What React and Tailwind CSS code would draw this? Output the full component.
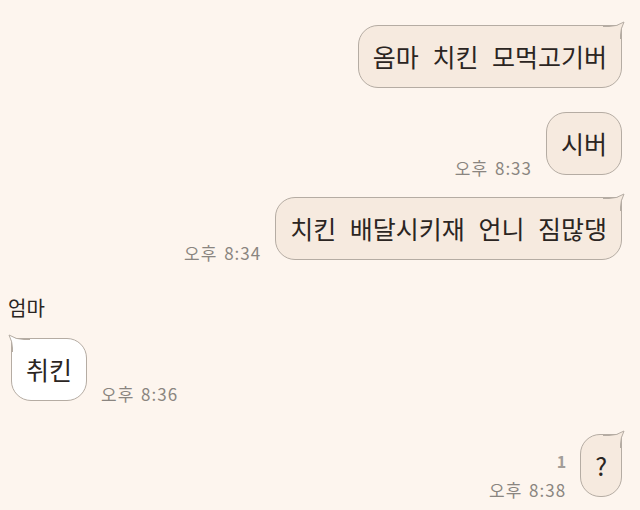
import React from 'react';

const FONT = { fontFamily: '"Noto Sans CJK KR", "Noto Sans", sans-serif' };

function Ear({ side, fill }) {
  // little pointed corner of the speech bubble
  const right = side === 'right';
  return (
    <svg
      width="22"
      height="18"
      viewBox="0 0 22 18"
      className={`absolute top-[-5px] ${right ? 'right-[-4px]' : 'left-[-4px] -scale-x-100'}`}
    >
      <path d="M0 5.5 L6 5.5 Q14 5.5 21 1 Q17.5 8 17.5 14 L17.5 18 L0 18 Z" fill={fill} />
      <path d="M0 5.5 L6 5.5 Q14 5.5 21 1 Q17.5 8 17.5 14 L17.5 18" fill="none" stroke="#b5aca3" strokeWidth="1" />
    </svg>
  );
}

function Bubble({ text, mine = true, tail = false }) {
  const fill = mine ? '#f6eadf' : '#ffffff';
  return (
    <div
      className={`relative rounded-[20px] border border-[#b5aca3] px-[14px] py-[15px] text-[25px] leading-[31px] text-[#2b2522] [word-spacing:8px] ${mine ? 'bg-[#f6eadf]' : 'bg-white'} ${tail ? (mine ? 'rounded-tr-none' : 'rounded-tl-none') : ''}`}
    >
      {tail && <Ear side={mine ? 'right' : 'left'} fill={fill} />}
      <span className="relative">{text}</span>
    </div>
  );
}

function Time({ t }) {
  return (
    <span className="mb-[-4px] text-[17px] leading-[22px] tracking-[1px] text-[#8a8580] [word-spacing:2px]">{t}</span>
  );
}

export default function App() {
  return (
    <div className="h-[510px] w-[640px] overflow-hidden bg-[#fdf5ee] pt-[25px]" style={FONT}>
      <div className="flex justify-end pr-[18px]">
        <Bubble text="옴마 치킨 모먹고기버" tail />
      </div>
      <div className="mt-[24px] flex items-end justify-end gap-[14px] pr-[18px]">
        <Time t="오후 8:33" />
        <Bubble text="시버" />
      </div>
      <div className="mt-[22px] flex items-end justify-end gap-[14px] pr-[18px]">
        <Time t="오후 8:34" />
        <Bubble text="치킨 배달시키재 언니 짐많댕" tail />
      </div>

      <div className="mt-[34px] pl-[8px] text-[20px] leading-[28px] text-[#2b2522]">엄마</div>
      <div className="mt-[16px] flex items-end gap-[14px] pl-[11px]">
        <Bubble text="취킨" mine={false} tail />
        <Time t="오후 8:36" />
      </div>

      <div className="mt-[33px] flex items-end justify-end gap-[14px] pr-[18px]">
        <div className="flex flex-col items-end">
          <span className="mb-[10px] text-[16px] font-bold leading-[16px] text-[#a39d98]">1</span>
          <Time t="오후 8:38" />
        </div>
        <Bubble text="?" tail />
      </div>
    </div>
  );
}
